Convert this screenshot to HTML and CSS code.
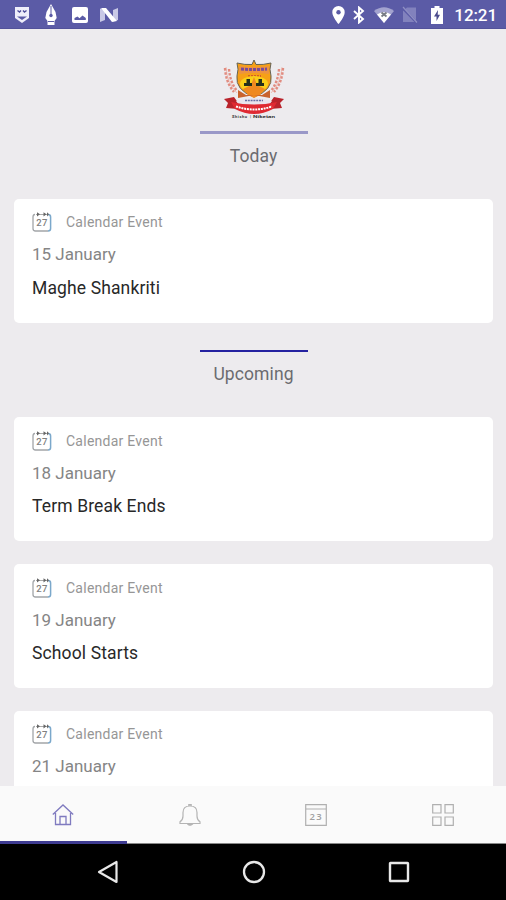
FILE: index.html
```html
<!DOCTYPE html>
<html lang="en">
<head>
<meta charset="utf-8">
<title>School Calendar</title>
<link rel="stylesheet" href="styles.css">
</head>
<body>
<svg class="defs" width="0" height="0">
  <symbol id="calendar" viewBox="0 0 20 22">
    <path d="M3 3.5H2.8Q1 3.5 1 6V17.5Q1 20 3.5 20H16" fill="none" stroke="#a2a5a8" stroke-width="1.3"/>
    <path d="M16 3.5Q18.6 3.5 18.6 6V17.5Q18.6 20 16 20" fill="none" stroke="#7ba8cb" stroke-width="1.5"/>
    <path d="M4 3.5H16" stroke="#aaa" stroke-width="1"/>
    <path d="M5 1.2L8 3.3L5 5.6ZM11.5 1.2L14.5 3.3L11.5 5.6ZM15 1.2L17 3.3L15 5.6Z" fill="#666"/>
    <text x="10" y="15.3" text-anchor="middle" font-family="Roboto, sans-serif" font-size="9.5" font-weight="500" fill="#808080">27</text>
  </symbol>
</svg>
<div class="screen">
  <header class="status">
    <div class="status-left">
      <svg width="16" height="18" viewBox="0 0 16 18"><path d="M1 1H15V12L8 17L1 12Z" fill="#eeeefa"/><path d="M3.5 4.5L5.5 6L7 4.5M9 4.5L10.5 6L12.5 4.5" fill="none" stroke="#4c4c98" stroke-width="1.4"/><path d="M3 10.5H13L8 14Z" fill="#5b5ba6"/></svg>
      <svg width="14" height="22" viewBox="0 0 14 22"><path d="M7 0L11.5 8L12.7 14L10.5 17V21H3.5V17L1.3 14L2.5 8Z" fill="#fff"/><path d="M7 2V11M4 17.5H10" stroke="#5b5ba6" stroke-width="1"/><circle cx="7" cy="11.5" r="1.7" fill="#5b5ba6"/></svg>
      <svg width="16" height="16" viewBox="0 0 16 16"><rect width="16" height="16" rx="2" fill="#fff"/><path d="M2.5 13V11L5.5 9.5L7.5 11.2L10.5 8.5L13.8 11V13Z" fill="#5b5ba6"/></svg>
      <svg width="18" height="16" viewBox="0 0 18 16"><path d="M0 1.5L5 3V13L0 15Z" fill="#c9c9e6"/><path d="M13 3L18 1V13L13 14.5Z" fill="#c9c9e6"/><path d="M1 1H6L17 14L12 15Z" fill="#fff"/></svg>
    </div>
    <div class="status-right">
      <svg class="pin" width="13" height="18" viewBox="0 0 13 18"><path d="M6.5 0A6.2 6.2 0 0 0 .3 6.2C.3 11 6.5 18 6.5 18S12.7 11 12.7 6.2A6.2 6.2 0 0 0 6.5 0Z" fill="#fff"/><circle cx="6.5" cy="6.3" r="2.2" fill="#5b5ba6"/></svg>
      <svg class="bt" width="12" height="18" viewBox="0 0 12 18"><path d="M1 5L10 13L6 16.5V1.5L10 5L1 13" fill="none" stroke="#fff" stroke-width="1.9"/></svg>
      <svg class="wifi" width="20" height="16" viewBox="0 0 20 16"><path d="M0 4Q10-3.5 20 4L10 16Z" fill="#a3a3cf"/><path d="M3 7.5Q10 3 17 7.5L10 16Z" fill="#fff"/><path d="M7.5 5.5L12.5 9.5M12.5 5.5L7.5 9.5" stroke="#777b84" stroke-width="1.8"/></svg>
      <svg class="sim" width="16" height="18" viewBox="0 0 16 18"><path d="M1 5L5 1.5H14V16H1Z" fill="#8282bd"/><path d="M0 1.5L15 17" stroke="#5b5ba6" stroke-width="2.5"/><path d="M1 1L15 16.5" stroke="#9090c4" stroke-width="1.2"/></svg>
      <svg class="battery" width="12" height="18" viewBox="0 0 12 18"><path d="M3.5 0H8.5V2H12V18H0V2H3.5Z" fill="#fff"/><path d="M7 4L3 10.5H5.5V15L9 8.8H6.7Z" fill="#4b4b8c"/></svg>
      <span class="clock">12:21</span>
    </div>
  </header>

  <main class="feed">
    <svg class="crest" width="62" height="62" viewBox="0 0 62 62">
      <g fill="none" stroke="#efc0b8" stroke-width="1"><path d="M3 8Q4 24 14 34M59 8Q58 24 48 34"/></g>
      <g fill="none" stroke="#e18c80" stroke-width="2.4" stroke-dasharray="2.5 1.5"><path d="M2 9Q3 24 11 33M6 10Q7 23 14 32M60 9Q59 24 51 33M56 10Q55 23 48 32"/></g>
      <path d="M31 1L33 5.5Q40 6 48 4Q46 10 48 17Q50 31 31 38Q12 31 14 17Q16 10 14 4Q22 6 29 5.5Z" fill="#f6a016" stroke="#666152" stroke-width="1"/>
      <path d="M16 7Q31 9 46 7V15Q31 13 16 15Z" fill="#ed9340"/>
      <path d="M18 10Q31 11 44 10" fill="none" stroke="#7a4a98" stroke-width="3" stroke-dasharray="3 1"/>
      <path d="M25 17H38" stroke="#c9482f" stroke-width="1.4" stroke-dasharray="2 1"/>
      <ellipse cx="31" cy="25" rx="14" ry="8" fill="#f9cf19"/>
      <path d="M31 18L34 26L42 30L37 36L31 39L25 36L20 30L28 26Z" fill="#ef8920"/>
      <path d="M23.5 20H27V24H29V27H21V24H23.5ZM35.5 20H39V24H41V27H33V24H35.5Z" fill="#24301c"/>
      <path d="M15 31L15 39L31 36L47 39L47 31L39 36H23Z" fill="#c9632d"/>
      <path d="M1 40L11 38L16 45L15 50L3 49L5 44ZM61 40L51 38L46 45L47 50L59 49L57 44Z" fill="#b9232b"/>
      <path d="M13 42Q31 36 49 42L46 46H16Z" fill="#e9e4ed"/>
      <path d="M22 41.5H40" stroke="#6870a4" stroke-width="1.7" stroke-dasharray="2 .8"/>
      <path d="M8 43Q31 48 54 43L50 50Q31 60 12 50Z" fill="#df2932"/>
      <path d="M13 47.5Q31 53.5 49 47.5" fill="none" stroke="#fff" stroke-width="2" stroke-dasharray="2 .8"/>
      <text class="crest-name" x="9" y="58.5" textLength="15">Shishu</text><text class="crest-name" x="27" y="58.5">|</text><text class="crest-name" x="30" y="58.5" textLength="22" lengthAdjust="spacingAndGlyphs">Niketan</text>
    </svg>
    <section class="group">
      <h2 class="heading heading-today">Today</h2>
      <article class="card"><div class="kind"><svg width="20" height="22"><use href="#calendar"/></svg><span>Calendar Event</span></div><p class="date">15 January</p><h3 class="title">Maghe Shankriti</h3></article>
    </section>
    <section class="group">
      <h2 class="heading">Upcoming</h2>
      <article class="card"><div class="kind"><svg width="20" height="22"><use href="#calendar"/></svg><span>Calendar Event</span></div><p class="date">18 January</p><h3 class="title">Term Break Ends</h3></article>
      <article class="card"><div class="kind"><svg width="20" height="22"><use href="#calendar"/></svg><span>Calendar Event</span></div><p class="date">19 January</p><h3 class="title">School Starts</h3></article>
      <article class="card"><div class="kind"><svg width="20" height="22"><use href="#calendar"/></svg><span>Calendar Event</span></div><p class="date">21 January</p></article>
    </section>
  </main>

  <nav class="tabs">
    <a class="tab active"><svg width="22" height="22" viewBox="0 0 22 22" fill="none" stroke="#7f7abf" stroke-width="1.3"><path d="M.8 10.5L11 1L21.2 10.5M3.5 9V20.5H18.5V9M8 20.5V12.5H14V20.5"/></svg></a>
    <a class="tab"><svg width="22" height="22" viewBox="0 0 22 22" fill="none" stroke="#b4b4b4" stroke-width="1.2"><path d="M1 19.5V17.8Q4 16 4 12V8.5Q4 2 11 2T18 8.5V12Q18 16 21 17.8V19.5ZM9.8 2V.6H12.2V2"/><path d="M8.5 20H13.5Q11 22.5 8.5 20" fill="#999"/></svg></a>
    <a class="tab"><svg width="22" height="22" viewBox="0 0 22 22" fill="none" stroke="#b0b0b0" stroke-width="1.2"><path d="M.7.7H21.3V21.3H.7ZM.7 5H21.3"/><text x="11.2" y="16" text-anchor="middle" font-family="Open Sans, sans-serif" font-size="9.5" font-weight="600" letter-spacing="1.2" fill="#a0a0a0" stroke="none">23</text></svg></a>
    <a class="tab"><svg width="22" height="22" viewBox="0 0 22 22" fill="none" stroke="#b0b0b0" stroke-width="1.2"><path d="M.7.7H9V9H.7ZM13 .7H21.3V9H13ZM.7 13H9V21.3H.7ZM13 13H21.3V21.3H13Z"/></svg></a>
  </nav>
  <footer class="system">
    <svg width="22" height="24" viewBox="0 0 22 24"><path d="M19.5 2V22L2 12Z" fill="none" stroke="#e8e8e8" stroke-width="2.2" stroke-linejoin="round"/></svg>
    <svg width="24" height="24" viewBox="0 0 24 24"><circle cx="12" cy="12" r="10" fill="none" stroke="#e8e8e8" stroke-width="2.3"/></svg>
    <svg width="22" height="22" viewBox="0 0 22 22"><rect x="2" y="2" width="18" height="18" rx=".5" fill="none" stroke="#e8e8e8" stroke-width="2.4"/></svg>
  </footer>
</div>
</body>
</html>
```
FILE: styles.css
```css
* { box-sizing: border-box; }
body { margin: 0; font-family: Roboto, sans-serif; }
h2, h3, p { margin: 0; font-weight: 400; }
svg { display: block; flex: none; }
.defs { display: none; }
.screen { width: 506px; height: 900px; display: flex; flex-direction: column; overflow: hidden; background: #edebee; }

.status { height: 28.5px; flex: none; display: flex; justify-content: space-between; padding: 2px 9px 0 14px; background: #5b5ba6; border-bottom: 1px solid #52529a; }
.status-left, .status-right { display: flex; align-items: center; }
.status-left { gap: 14px; }
.status-left svg:nth-child(4) { margin-left: -2px; }
.pin { margin-right: 3px; }
.bt { margin-left: 5px; }
.wifi { margin-left: 9px; }
.sim { margin-left: 8px; }
.battery { margin-left: 13px; }
.clock { margin-left: 11px; color: #fff; font-size: 17px; font-weight: 500; line-height: 24px; padding-top: 1px; letter-spacing: -.1px; }

.feed { flex: 1; min-height: 0; overflow: hidden; padding: 30.5px 13px 0 14px; }
.crest { margin: 0 auto 10px; }
.crest-name { font-size: 4px; font-weight: 700; fill: #333; }
.heading { width: 108px; height: 67.5px; margin: 0 auto; padding-top: 11px; border-top: 2px solid #2522a0; color: #6b6b70; font-size: 17.5px; line-height: 22px; text-align: center; letter-spacing: .1px; }
.heading-today { border-top: 3px solid #9a98c8; height: 68px; padding-top: 11px; }
.group + .group { margin-top: 27.3px; }
.card { height: 123.7px; padding: 12.4px 18px 0; border-radius: 5px; background: #fff; }
.card + .card { margin-top: 23px; }
.kind { display: flex; align-items: center; gap: 14px; height: 22px; color: #969696; font-size: 14px; letter-spacing: .25px; }
.date { margin-top: 10px; color: #858585; font-size: 17px; line-height: 22px; letter-spacing: 0; }
.title { margin-top: 11.4px; color: #282828; font-size: 17.5px; line-height: 22px; letter-spacing: .13px; }

.tabs { height: 58px; flex: none; display: grid; grid-template-columns: repeat(4, 1fr); background: #fafafa; }
.tab { display: flex; justify-content: center; padding-top: 18px; border-bottom: 1px solid #888; }
.tab.active { border-bottom: 3px solid #3e3b91; }
.system { height: 56px; flex: none; display: flex; align-items: center; justify-content: space-between; padding: 0 96px 0 97px; background: #000; }
```
